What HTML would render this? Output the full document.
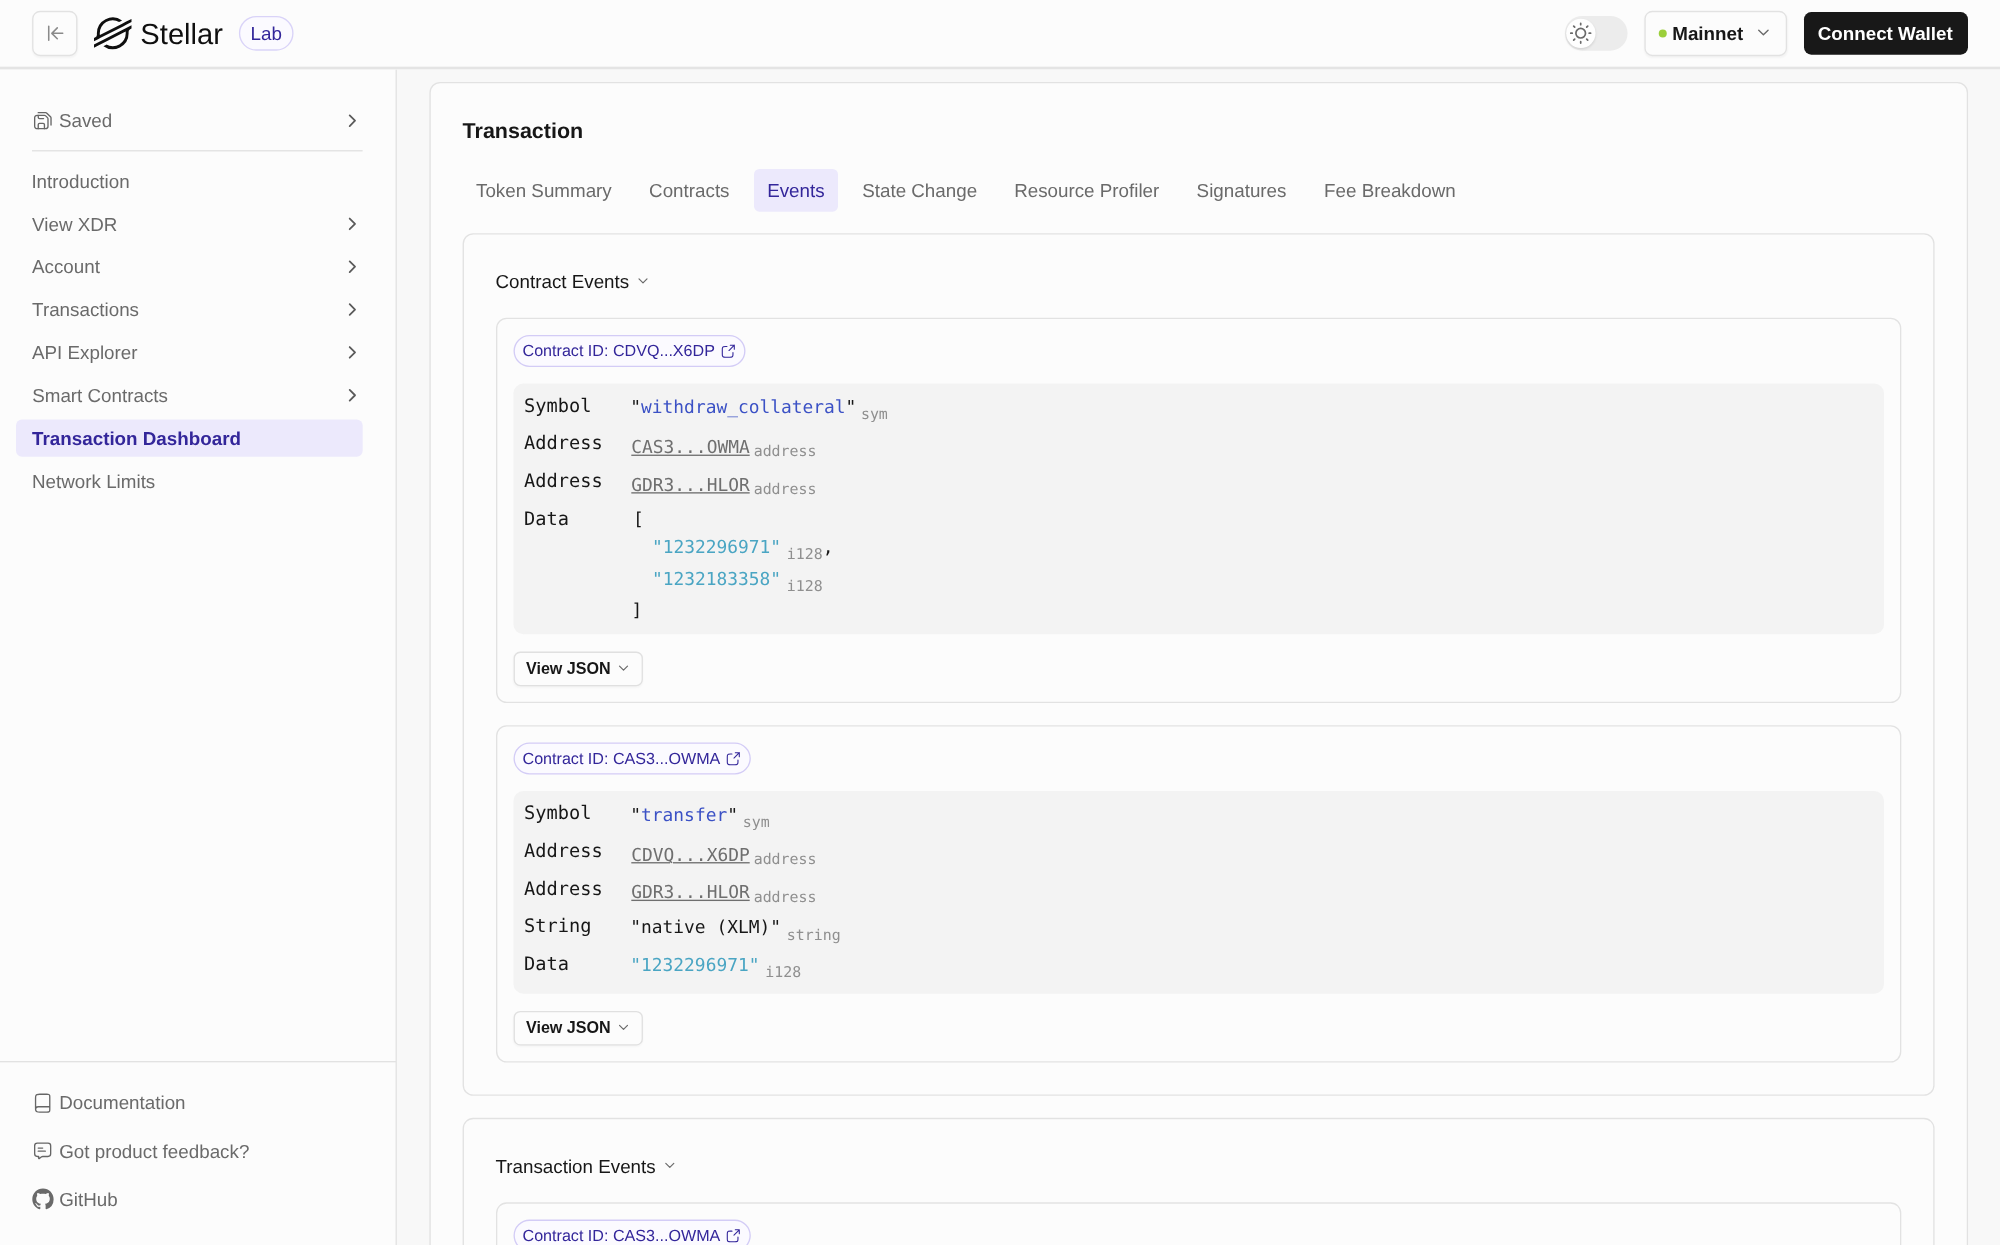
<!DOCTYPE html>
<html lang="en">
<head>
<meta charset="utf-8">
<title>Transaction Dashboard - Stellar Lab</title>
<style>
*{box-sizing:border-box;margin:0;padding:0}
html,body{width:2000px;height:1245px;overflow:hidden;background:#f8f8f8}
body{font-family:"Liberation Sans",Arial,Helvetica,sans-serif;font-size:14px;color:#171717;position:relative;text-rendering:geometricPrecision}
#app{position:absolute;left:0;top:0;width:1500px;height:934px;overflow:hidden;transform:scale(1.3333333);transform-origin:0 0;will-change:transform}
.a{position:absolute;left:0;top:0;display:block;transform-origin:0 0}
.ic{overflow:visible}
.t{white-space:pre;font-weight:normal;text-decoration:none;font-size:14.105px}
.m{font-family:"DejaVu Sans Mono","Liberation Mono",monospace}
button{font:inherit;color:inherit;background:none;border:0}
.btnbox{border:1px solid #e2e2e2;border-radius:6px;background:#fcfcfc;box-shadow:0 1px 1.5px rgba(0,0,0,.035)}
.panel{background:#fcfcfc;border:1px solid #e2e2e2;border-radius:8px}
.nav{color:#6a6a6a}
.tab{border-radius:4px}
.tab.on{background:#ece9fc}
.badge{border:1px solid #d3ccf6;border-radius:12px;background:#fbfaff}
.code{background:#f3f3f3;border-radius:7.5px}
.vj{border:1px solid #e0e0e0;border-radius:5px;background:#fcfcfc;box-shadow:0 1px 1.5px rgba(0,0,0,.03)}
u{text-decoration:underline;text-underline-offset:0.6px;text-decoration-thickness:1px}
</style>
</head>
<body>

<div id="app">
 <header id="hdr" class="a" style="transform:translate(0px,0px);width:1500px;height:51.998px;background:#fcfcfc;border-bottom:2px solid #e4e4e4;z-index:5">
  <button class="a btnbox" aria-label="Collapse sidebar" style="transform:translate(24.075px,8.1px);width:34px;height:34px">
   <svg class="a ic" width="14" height="14" viewBox="0 0 24 24" aria-hidden="true" style="transform:translate(9.725px,8.9px);color:#8a8a8a"><path d="M3 3v18M21 12H7m0 0l7 7m-7-7l7-7" fill="none" stroke="currentColor" stroke-width="2" stroke-linecap="round" stroke-linejoin="round"/></svg>
  </button>
  <a class="a brand" style="transform:translate(0px,0px)">
   <svg class="a ic" width="28.125" height="23.85" viewBox="0 0 236.36 200" aria-hidden="true" style="transform:translate(70.5px,13.05px);color:#0f0f0f"><path fill="currentColor" d="M203,26.16l-28.46,14.5-137.43,70a82.49,82.490,0,0,1-.7-10.690A81.870,81.870,0,0,1,158.200,28.600l16.290-8.300,2.430-1.240A100,100,0,0,0,18.180,100q0,3.820.290,7.610a18.190,18.190,0,0,1-9.880,17.580L0,129.570V150l25.290-12.890,0,0,8.190-4.180,8.070-4.110v0L186.430,55l16.280-8.290,33.650-17.150V9.140Z"/><path fill="currentColor" d="M236.36,50,49.780,145,33.500,153.310,0,170.380v20.410l33.270-16.950,28.460-14.500L199.300,89.240A83.450,83.450,0,0,1,200,100,81.870,81.870,0,0,1,78.090,171.360l-1,.53-17.660,9A100,100,0,0,0,218.180,100c0-2.570-.1-5.140-.29-7.680a18.200,18.200,0,0,1,9.870-17.580l8.600-4.380Z"/></svg>
   <span class="a t" style="transform:translate(105.275px,12px);line-height:27px;font-size:21.863px;color:#0f0f0f">Stellar</span>
  </a>
  <span id="lab" class="a" style="transform:translate(179.175px,12px);width:41px;height:26px;border:1px solid #d9d3f8;border-radius:13px;background:#fbfaff">
   <span class="a t" style="transform:translate(7.75px,2.925px);line-height:18px;color:#33269a">Lab</span>
  </span>
  <div id="toggle" class="a" role="switch" aria-label="Theme" style="transform:translate(1173.675px,12px);width:47.25px;height:26.003px;border-radius:13px;background:#ececec">
   <div id="knob" class="a" style="transform:translate(0.975px,2.025px);width:22.05px;height:22.05px;border-radius:50%;background:#fefefe;box-shadow:0 1px 2px rgba(0,0,0,.12)">
    <svg class="a ic" width="18.6" height="18.6" viewBox="-12 -12 24 24" aria-hidden="true" style="transform:translate(1.575px,1.575px);color:#6a6a6a"><g fill="none" stroke="currentColor" stroke-width="1.65" stroke-linecap="round"><circle r="4.650"/><path d="M0-8.200V-9.600M0 8.200V9.600M-8.200 0H-9.600M8.200 0H9.600M-5.800-5.800L-6.800-6.800M5.800-5.800L6.800-6.800M-5.800 5.800L-6.800 6.800M5.800 5.800L6.800 6.800"/></g></svg>
   </div>
  </div>
  <div id="net" class="a btnbox" style="transform:translate(1233.3px,8.1px);width:107px;height:34px">
   <span class="a dot" style="transform:translate(9.762px,12.988px);width:6.075px;height:6.075px;border-radius:50%;background:#9bcf3a"></span>
   <span class="a t" style="transform:translate(19.9px,6.75px);line-height:18px;font-weight:bold">Mainnet</span>
   <svg class="a ic" width="14" height="14" viewBox="0 0 24 24" aria-hidden="true" style="transform:translate(81.253px,8.277px);color:#6a6a6a"><path d="M6 9l6 6 6-6" fill="none" stroke="currentColor" stroke-width="1.8" stroke-linecap="round" stroke-linejoin="round"/></svg>
  </div>
  <button id="cw" class="a" style="transform:translate(1353px,9px);width:122.55px;height:31.95px;border-radius:5.5px;background:#181818">
   <span class="a t" style="transform:translate(10.275px,7.3px);line-height:18px;color:#fff;font-weight:bold">Connect Wallet</span>
  </button>
 </header>
 <nav id="side" class="a" style="transform:translate(-0.338px,51.998px);width:297.998px;height:883.253px;background:#fcfcfc;border-right:1px solid #e2e2e2">
  <svg class="a ic" width="16" height="16" viewBox="0 0 24 24" aria-hidden="true" style="transform:translate(24.337px,30.502px);color:#666"><g fill="none" stroke="currentColor" stroke-width="1.5" stroke-linecap="round" stroke-linejoin="round"><path d="M7 3h8.300c.500 0 1 .200 1.400.600l4.100 4.100c.400.400.600.900.600 1.400V17"/><path d="M5.800 6H14c.500 0 1 .200 1.400.600l2 2c.400.400.600.900.600 1.400v8.200a2.800 2.800 0 0 1-2.800 2.800H5.800A2.800 2.800 0 0 1 3 18.200V8.800A2.800 2.800 0 0 1 5.800 6z"/><path d="M7 6v2.200a1.500 1.500 0 0 0 1.500 1.500H13"/><path d="M7 21v-4.500A1.500 1.500 0 0 1 8.500 15h4a1.500 1.500 0 0 1 1.500 1.500V21"/></g></svg>
  <a class="a t nav" style="transform:translate(44.562px,29.553px);line-height:18px">Saved</a>
  <svg class="a ic" width="16" height="16" viewBox="0 0 24 24" aria-hidden="true" style="transform:translate(256.613px,30.527px);color:#5a5a5a"><path d="M9 18l6-6-6-6" fill="none" stroke="currentColor" stroke-width="2" stroke-linecap="round" stroke-linejoin="round"/></svg>
  <div id="sep" class="a" style="transform:translate(24.337px,60.578px);width:248.25px;height:1px;background:#e2e2e2"></div>
  <a class="a t nav" style="transform:translate(23.887px,74.778px);line-height:18px">Introduction</a>
  <a class="a t nav" style="transform:translate(24.388px,106.915px);line-height:18px">View XDR</a>
  <svg class="a ic" width="16" height="16" viewBox="0 0 24 24" aria-hidden="true" style="transform:translate(256.613px,107.89px);color:#5a5a5a"><path d="M9 18l6-6-6-6" fill="none" stroke="currentColor" stroke-width="2" stroke-linecap="round" stroke-linejoin="round"/></svg>
  <a class="a t nav" style="transform:translate(24.337px,139.053px);line-height:18px">Account</a>
  <svg class="a ic" width="16" height="16" viewBox="0 0 24 24" aria-hidden="true" style="transform:translate(256.613px,140.027px);color:#5a5a5a"><path d="M9 18l6-6-6-6" fill="none" stroke="currentColor" stroke-width="2" stroke-linecap="round" stroke-linejoin="round"/></svg>
  <a class="a t nav" style="transform:translate(24.413px,171.19px);line-height:18px">Transactions</a>
  <svg class="a ic" width="16" height="16" viewBox="0 0 24 24" aria-hidden="true" style="transform:translate(256.613px,172.165px);color:#5a5a5a"><path d="M9 18l6-6-6-6" fill="none" stroke="currentColor" stroke-width="2" stroke-linecap="round" stroke-linejoin="round"/></svg>
  <a class="a t nav" style="transform:translate(24.337px,203.328px);line-height:18px">API Explorer</a>
  <svg class="a ic" width="16" height="16" viewBox="0 0 24 24" aria-hidden="true" style="transform:translate(256.613px,204.302px);color:#5a5a5a"><path d="M9 18l6-6-6-6" fill="none" stroke="currentColor" stroke-width="2" stroke-linecap="round" stroke-linejoin="round"/></svg>
  <a class="a t nav" style="transform:translate(24.488px,235.465px);line-height:18px">Smart Contracts</a>
  <svg class="a ic" width="16" height="16" viewBox="0 0 24 24" aria-hidden="true" style="transform:translate(256.613px,236.44px);color:#5a5a5a"><path d="M9 18l6-6-6-6" fill="none" stroke="currentColor" stroke-width="2" stroke-linecap="round" stroke-linejoin="round"/></svg>
  <div id="active" class="a" style="transform:translate(12.338px,262.553px);width:260.25px;height:27.997px;border-radius:4.5px;background:#ece9fc">
   <a class="a t" style="transform:translate(12.075px,4.975px);line-height:18px;color:#33269a;font-weight:bold">Transaction Dashboard</a>
  </div>
  <a class="a t nav" style="transform:translate(24.362px,299.74px);line-height:18px">Network Limits</a>
  <div id="foot" class="a" style="transform:translate(0.338px,743.753px);width:296.625px;height:1px;background:#e2e2e2"></div>
  <svg class="a ic" width="16" height="16" viewBox="0 0 24 24" aria-hidden="true" style="transform:translate(24.337px,767.378px);color:#666"><path d="M20 19v-3H7a3 3 0 0 0-3 3m4.800 3h8c1.120 0 1.680 0 2.108-.218a2 2 0 0 0 .874-.874C20 20.480 20 19.920 20 18.800V5.200c0-1.120 0-1.680-.218-2.108a2 2 0 0 0-.874-.874C18.480 2 17.920 2 16.800 2h-8c-1.680 0-2.520 0-3.162.327a3 3 0 0 0-1.311 1.311C4 4.280 4 5.120 4 6.800v10.400c0 1.680 0 2.520.327 3.162a3 3 0 0 0 1.311 1.311C6.280 22 7.120 22 8.800 22z" fill="none" stroke="currentColor" stroke-width="1.5" stroke-linecap="round" stroke-linejoin="round"/></svg>
  <a class="a t nav" style="transform:translate(44.688px,766.053px);line-height:18px">Documentation</a>
  <svg class="a ic" width="16" height="16" viewBox="0 0 24 24" aria-hidden="true" style="transform:translate(24.337px,803.378px);color:#666"><path d="M7 8.500h5M7 12h8M7.500 18H6a3 3 0 0 1-3-3V6a3 3 0 0 1 3-3h12a3 3 0 0 1 3 3v9a3 3 0 0 1-3 3h-5.800c-.700 0-1.300.200-1.800.600l-2.100 1.700c-.300.300-.800 0-.800-.400V18" fill="none" stroke="currentColor" stroke-width="1.5" stroke-linecap="round" stroke-linejoin="round"/></svg>
  <a class="a t nav" style="transform:translate(44.738px,802.128px);line-height:18px">Got product feedback?</a>
  <svg class="a ic" width="16" height="16" viewBox="0 0 16 16" aria-hidden="true" style="transform:translate(24.562px,839.378px);color:#6a6a6a"><path fill="currentColor" d="M8 0C3.580 0 0 3.580 0 8c0 3.540 2.290 6.530 5.470 7.590.4.070.550-.170.550-.380 0-.190-.010-.820-.010-1.490-2.010.370-2.530-.490-2.690-.940-.090-.230-.480-.940-.820-1.130-.280-.150-.680-.520-.010-.530.630-.010 1.080.580 1.230.820.720 1.210 1.870.870 2.330.660.070-.520.280-.870.510-1.070-1.780-.200-3.640-.890-3.640-3.950 0-.870.310-1.590.820-2.150-.080-.200-.360-1.020.080-2.120 0 0 .670-.210 2.200.820.640-.180 1.320-.270 2-.270s1.360.090 2 .270c1.530-1.040 2.200-.820 2.200-.820.440 1.100.160 1.920.080 2.120.510.560.820 1.270.820 2.150 0 3.070-1.870 3.750-3.650 3.950.290.250.540.730.540 1.480 0 1.070-.010 1.930-.010 2.200 0 .210.150.460.550.380A8.013 8.013 0 0 0 16 8c0-4.420-3.580-8-8-8z"/></svg>
  <a class="a t nav" style="transform:translate(44.738px,838.428px);line-height:18px">GitHub</a>
 </nav>
 <main id="main" class="a" style="transform:translate(297.998px,51.998px)">
  <div id="card" class="a panel" style="transform:translate(24.053px,9.502px);width:1154px;height:975px">
   <h1 class="a t" style="transform:translate(23.9px,26.75px);line-height:19px;font-size:16.12px;font-weight:bold">Transaction</h1>
   <div class="a" role="tablist" style="transform:translate(24.2px,64.25px)">
    <div class="a tab" role="tab" style="transform:translate(-0.45px,0px);height:32.003px">
     <span class="a t" style="transform:translate(10.2px,7.15px);line-height:18px;color:#6a6a6a">Token Summary</span>
    </div>
    <div class="a tab" role="tab" style="transform:translate(129.675px,0px);height:32.003px">
     <span class="a t" style="transform:translate(9.9px,7.15px);line-height:18px;color:#6a6a6a">Contracts</span>
    </div>
    <div class="a tab on" role="tab" aria-selected="true" style="transform:translate(218.25px,0px);width:62.775px;height:32.003px">
     <span class="a t" style="transform:translate(9.85px,7.15px);line-height:18px;color:#33269a">Events</span>
    </div>
    <div class="a tab" role="tab" style="transform:translate(289.5px,0px);height:32.003px">
     <span class="a t" style="transform:translate(9.9px,7.15px);line-height:18px;color:#6a6a6a">State Change</span>
    </div>
    <div class="a tab" role="tab" style="transform:translate(403.95px,0px);height:32.003px">
     <span class="a t" style="transform:translate(9.4px,7.15px);line-height:18px;color:#6a6a6a">Resource Profiler</span>
    </div>
    <div class="a tab" role="tab" style="transform:translate(540.3px,0px);height:32.003px">
     <span class="a t" style="transform:translate(9.9px,7.15px);line-height:18px;color:#6a6a6a">Signatures</span>
    </div>
    <div class="a tab" role="tab" style="transform:translate(636.375px,0px);height:32.003px">
     <span class="a t" style="transform:translate(9.4px,7.15px);line-height:18px;color:#6a6a6a">Fee Breakdown</span>
    </div>
   </div>
   <section class="a panel" style="transform:translate(23.9px,112.4px);width:1104px;height:647px">
    <h2 class="a t" style="transform:translate(23.675px,26.25px);line-height:18px">Contract Events</h2>
    <svg class="a ic" width="12" height="12" viewBox="0 0 24 24" aria-hidden="true" style="transform:translate(128.3px,28.7px);color:#6a6a6a"><path d="M6 9l6 6 6-6" fill="none" stroke="currentColor" stroke-width="1.8" stroke-linecap="round" stroke-linejoin="round"/></svg>
    <article class="a panel ev" style="transform:translate(24.05px,62.375px);width:1054px;height:289px">
     <a class="a badge" style="transform:translate(12.125px,11.975px);width:174px;height:24px">
      <span class="a t" style="transform:translate(5.775px,2.9px);line-height:16px;font-size:12.09px;color:#33269a">Contract ID: CDVQ...X6DP</span>
      <svg class="a ic" width="12" height="12" viewBox="0 0 24 24" aria-hidden="true" style="transform:translate(154.1px,5.15px);color:#33269a"><path d="M21 9V3m0 0h-6m6 0l-8 8m-3-6H7.800c-1.680 0-2.520 0-3.162.327a3 3 0 0 0-1.311 1.311C3 7.280 3 8.120 3 9.800v6.400c0 1.680 0 2.520.327 3.162a3 3 0 0 0 1.311 1.311C5.280 21 6.120 21 7.800 21h6.400c1.680 0 2.520 0 3.162-.327a3 3 0 0 0 1.311-1.311C19 18.720 19 17.880 19 16.200V14" fill="none" stroke="currentColor" stroke-width="1.65" stroke-linecap="round" stroke-linejoin="round"/></svg>
     </a>
     <div class="a code" style="transform:translate(12.05px,48.35px);width:1027.95px;height:187.875px">
      <span class="a t m" style="transform:translate(8.025px,8.275px);line-height:18px;font-size:14px">Symbol</span>
      <span class="a t m" style="transform:translate(87.675px,10.25px);line-height:17px;font-size:13.425px">&quot;<span style="color:#3b51c5">withdraw_collateral</span>&quot;</span>
      <span class="a t m" style="transform:translate(260.633px,15.7px);line-height:15px;font-size:11.197px;color:#8f8f8f">sym</span>
      <span class="a t m" style="transform:translate(8.025px,36.475px);line-height:18px;font-size:14px">Address</span>
      <span class="a t m" style="transform:translate(88.425px,40.325px);line-height:17px;font-size:13.425px"><span style="color:#6f6f6f"><u>CAS3...OWMA</u></span></span>
      <span class="a t m" style="transform:translate(180.183px,43.75px);line-height:15px;font-size:11.197px;color:#8f8f8f">address</span>
      <span class="a t m" style="transform:translate(8.025px,64.675px);line-height:18px;font-size:14px">Address</span>
      <span class="a t m" style="transform:translate(88.425px,68.525px);line-height:17px;font-size:13.425px"><span style="color:#6f6f6f"><u>GDR3...HLOR</u></span></span>
      <span class="a t m" style="transform:translate(180.183px,71.95px);line-height:15px;font-size:11.197px;color:#8f8f8f">address</span>
      <span class="a t m" style="transform:translate(8.025px,92.875px);line-height:18px;font-size:14px">Data</span>
      <span class="a t m" style="transform:translate(89.625px,94.1px);line-height:17px;font-size:13.425px">[</span>
      <span class="a t m" style="transform:translate(103.875px,114.95px);line-height:17px;font-size:13.425px"><span style="color:#4aa5c3">&quot;1232296971&quot;</span></span>
      <span class="a t m" style="transform:translate(205.065px,120.475px);line-height:15px;font-size:11.197px;color:#8f8f8f">i128</span>
      <span class="a t m" style="transform:translate(232.031px,114.95px);line-height:17px;font-size:13.425px">,</span>
      <span class="a t m" style="transform:translate(103.875px,138.875px);line-height:17px;font-size:13.425px"><span style="color:#4aa5c3">&quot;1232183358&quot;</span></span>
      <span class="a t m" style="transform:translate(205.065px,144.4px);line-height:15px;font-size:11.197px;color:#8f8f8f">i128</span>
      <span class="a t m" style="transform:translate(88.575px,162.35px);line-height:17px;font-size:13.425px">]</span>
     </div>
     <button class="a vj" style="transform:translate(12.2px,249.425px);width:97px;height:26px">
      <span class="a t" style="transform:translate(8.275px,3.875px);line-height:16px;font-size:12.09px;font-weight:bold">View JSON</span>
      <svg class="a ic" width="12" height="12" viewBox="0 0 24 24" aria-hidden="true" style="transform:translate(75.425px,5.375px);color:#6a6a6a"><path d="M6 9l6 6 6-6" fill="none" stroke="currentColor" stroke-width="1.8" stroke-linecap="round" stroke-linejoin="round"/></svg>
     </button>
    </article>
    <article class="a panel ev" style="transform:translate(24.05px,368px);width:1054px;height:253px">
     <a class="a badge" style="transform:translate(12.125px,11.975px);width:178px;height:24px">
      <span class="a t" style="transform:translate(5.775px,2.9px);line-height:16px;font-size:12.09px;color:#33269a">Contract ID: CAS3...OWMA</span>
      <svg class="a ic" width="12" height="12" viewBox="0 0 24 24" aria-hidden="true" style="transform:translate(157.85px,5.15px);color:#33269a"><path d="M21 9V3m0 0h-6m6 0l-8 8m-3-6H7.800c-1.680 0-2.520 0-3.162.327a3 3 0 0 0-1.311 1.311C3 7.280 3 8.120 3 9.800v6.400c0 1.680 0 2.520.327 3.162a3 3 0 0 0 1.311 1.311C5.280 21 6.120 21 7.800 21h6.400c1.680 0 2.520 0 3.162-.327a3 3 0 0 0 1.311-1.311C19 18.720 19 17.880 19 16.200V14" fill="none" stroke="currentColor" stroke-width="1.65" stroke-linecap="round" stroke-linejoin="round"/></svg>
     </a>
     <div class="a code" style="transform:translate(12.05px,48.35px);width:1027.95px;height:151.725px">
      <span class="a t m" style="transform:translate(8.025px,8.275px);line-height:18px;font-size:14px">Symbol</span>
      <span class="a t m" style="transform:translate(87.675px,10.25px);line-height:17px;font-size:13.425px">&quot;<span style="color:#3b51c5">transfer</span>&quot;</span>
      <span class="a t m" style="transform:translate(171.95px,15.7px);line-height:15px;font-size:11.197px;color:#8f8f8f">sym</span>
      <span class="a t m" style="transform:translate(8.025px,36.475px);line-height:18px;font-size:14px">Address</span>
      <span class="a t m" style="transform:translate(88.425px,40.325px);line-height:17px;font-size:13.425px"><span style="color:#6f6f6f"><u>CDVQ...X6DP</u></span></span>
      <span class="a t m" style="transform:translate(180.183px,43.75px);line-height:15px;font-size:11.197px;color:#8f8f8f">address</span>
      <span class="a t m" style="transform:translate(8.025px,64.675px);line-height:18px;font-size:14px">Address</span>
      <span class="a t m" style="transform:translate(88.425px,68.525px);line-height:17px;font-size:13.425px"><span style="color:#6f6f6f"><u>GDR3...HLOR</u></span></span>
      <span class="a t m" style="transform:translate(180.183px,71.95px);line-height:15px;font-size:11.197px;color:#8f8f8f">address</span>
      <span class="a t m" style="transform:translate(8.025px,92.875px);line-height:18px;font-size:14px">String</span>
      <span class="a t m" style="transform:translate(87.675px,94.85px);line-height:17px;font-size:13.425px">&quot;native (XLM)&quot;</span>
      <span class="a t m" style="transform:translate(205.03px,100.45px);line-height:15px;font-size:11.197px;color:#8f8f8f">string</span>
      <span class="a t m" style="transform:translate(8.025px,121.075px);line-height:18px;font-size:14px">Data</span>
      <span class="a t m" style="transform:translate(87.675px,123.05px);line-height:17px;font-size:13.425px"><span style="color:#4aa5c3">&quot;1232296971&quot;</span></span>
      <span class="a t m" style="transform:translate(188.865px,128.65px);line-height:15px;font-size:11.197px;color:#8f8f8f">i128</span>
     </div>
     <button class="a vj" style="transform:translate(12.2px,213.275px);width:97px;height:26px">
      <span class="a t" style="transform:translate(8.275px,3.875px);line-height:16px;font-size:12.09px;font-weight:bold">View JSON</span>
      <svg class="a ic" width="12" height="12" viewBox="0 0 24 24" aria-hidden="true" style="transform:translate(75.425px,5.375px);color:#6a6a6a"><path d="M6 9l6 6 6-6" fill="none" stroke="currentColor" stroke-width="1.8" stroke-linecap="round" stroke-linejoin="round"/></svg>
     </button>
    </article>
   </section>
   <section class="a panel" style="transform:translate(23.9px,775.85px);width:1104px;height:375px">
    <h2 class="a t" style="transform:translate(23.675px,26.25px);line-height:18px">Transaction Events</h2>
    <svg class="a ic" width="12" height="12" viewBox="0 0 24 24" aria-hidden="true" style="transform:translate(148.4px,28.7px);color:#6a6a6a"><path d="M6 9l6 6 6-6" fill="none" stroke="currentColor" stroke-width="1.8" stroke-linecap="round" stroke-linejoin="round"/></svg>
    <article class="a panel ev" style="transform:translate(24.05px,62.375px);width:1054px;height:225px">
     <a class="a badge" style="transform:translate(12.125px,11.975px);width:178px;height:24px">
      <span class="a t" style="transform:translate(5.775px,2.9px);line-height:16px;font-size:12.09px;color:#33269a">Contract ID: CAS3...OWMA</span>
      <svg class="a ic" width="12" height="12" viewBox="0 0 24 24" aria-hidden="true" style="transform:translate(157.85px,5.15px);color:#33269a"><path d="M21 9V3m0 0h-6m6 0l-8 8m-3-6H7.800c-1.680 0-2.520 0-3.162.327a3 3 0 0 0-1.311 1.311C3 7.280 3 8.120 3 9.800v6.400c0 1.680 0 2.520.327 3.162a3 3 0 0 0 1.311 1.311C5.280 21 6.120 21 7.800 21h6.400c1.680 0 2.520 0 3.162-.327a3 3 0 0 0 1.311-1.311C19 18.720 19 17.880 19 16.200V14" fill="none" stroke="currentColor" stroke-width="1.65" stroke-linecap="round" stroke-linejoin="round"/></svg>
     </a>
    </article>
   </section>
  </div>
 </main>
</div>
</body>
</html>
